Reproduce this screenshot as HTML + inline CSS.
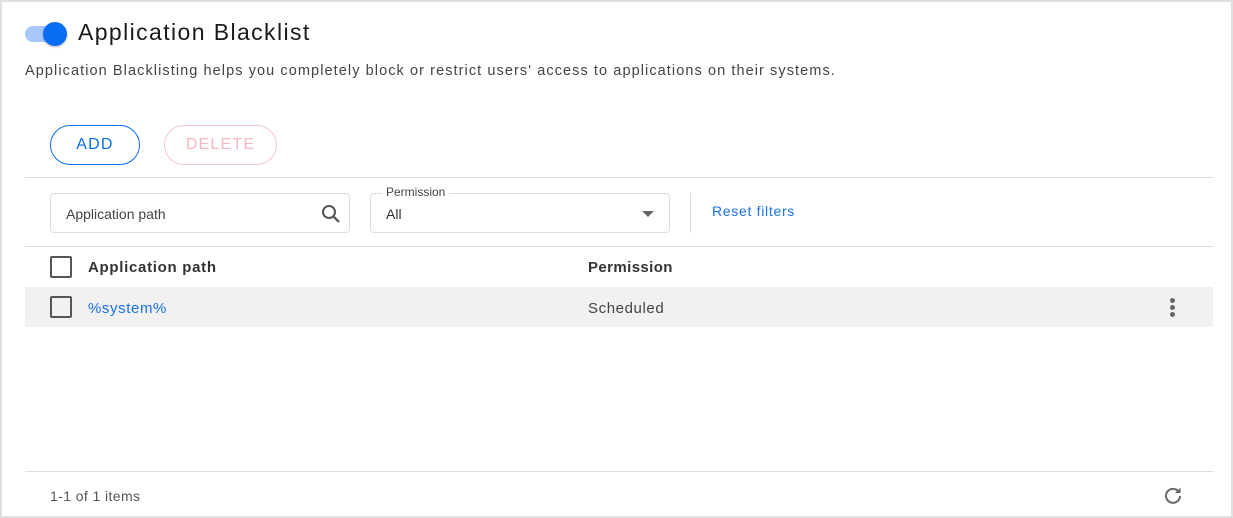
<!DOCTYPE html>
<html><head><style>
*{box-sizing:border-box;margin:0;padding:0}
body{width:1233px;height:518px;background:#e0e0e0;font-family:"Liberation Sans",sans-serif;position:relative;overflow:hidden}
.frame{position:absolute;left:2px;top:2px;width:1229px;height:514px;background:#fff}
.a{position:absolute}
</style></head><body>
<div class="frame"></div>
<div class="a" style="left:25px;top:26px;width:40px;height:16px;border-radius:8px;background:#a8c8fb"></div>
<div class="a" style="left:43px;top:22px;width:24px;height:24px;border-radius:50%;background:#0a6ef5;box-shadow:0 1px 2px rgba(0,0,0,.3)"></div>
<div class="a" style="left:78px;top:19px;font-size:23px;color:#1a1a1a;letter-spacing:1.4px">Application Blacklist</div>
<div class="a" style="left:25px;top:63px;font-size:14.5px;color:#444;letter-spacing:1.08px;white-space:nowrap">Application Blacklisting helps you completely block or restrict users' access to applications on their systems.</div>
<div class="a" style="left:50px;top:125px;width:90px;height:40px;border:1px solid #0a6ef5;border-radius:20px;color:#0a6ef5;font-size:16px;text-align:center;line-height:38px;letter-spacing:1.2px">ADD</div>
<div class="a" style="left:164px;top:125px;width:113px;height:40px;border:1px solid #f5c6cb;border-radius:20px;color:#f5b8bf;font-size:16px;text-align:center;line-height:38px;letter-spacing:1.2px">DELETE</div>
<div class="a" style="left:25px;top:177px;width:1188px;height:1px;background:#ddd"></div>
<div class="a" style="left:50px;top:193px;width:300px;height:40px;border:1px solid #ddd;border-radius:4px"></div>
<div class="a" style="left:66px;top:206px;font-size:14px;color:#444">Application path</div>
<svg class="a" style="left:320px;top:203px" width="22" height="22" viewBox="0 0 22 22"><circle cx="9" cy="9" r="6" fill="none" stroke="#555" stroke-width="2"/><path d="M13.5 13.5L19 19" stroke="#555" stroke-width="2.2"/></svg>
<div class="a" style="left:370px;top:193px;width:300px;height:40px;border:1px solid #ddd;border-radius:4px"></div>
<div class="a" style="left:382px;top:185px;padding:0 4px;background:#fff;font-size:12px;color:#444">Permission</div>
<div class="a" style="left:386px;top:206px;font-size:14px;color:#333">All</div>
<div class="a" style="left:642px;top:211px;width:0;height:0;border-left:6px solid transparent;border-right:6px solid transparent;border-top:6px solid #666"></div>
<div class="a" style="left:690px;top:193px;width:1px;height:40px;background:#ddd"></div>
<div class="a" style="left:712px;top:203px;font-size:14px;color:#1a73e8;letter-spacing:0.7px">Reset filters</div>
<div class="a" style="left:25px;top:246px;width:1188px;height:1px;background:#ddd"></div>
<div class="a" style="left:50px;top:256px;width:22px;height:22px;border:2px solid #555;border-radius:2px"></div>
<div class="a" style="left:88px;top:259px;font-size:15px;font-weight:bold;color:#333;letter-spacing:0.7px">Application path</div>
<div class="a" style="left:588px;top:259px;font-size:15px;font-weight:bold;color:#333;letter-spacing:0.4px">Permission</div>
<div class="a" style="left:25px;top:287px;width:1188px;height:40px;background:#f1f1f1"></div>
<div class="a" style="left:50px;top:296px;width:22px;height:22px;border:2px solid #555;border-radius:2px"></div>
<div class="a" style="left:88px;top:300px;font-size:15px;color:#1a73e8;letter-spacing:0.6px">%system%</div>
<div class="a" style="left:588px;top:300px;font-size:15px;color:#444;letter-spacing:0.6px">Scheduled</div>
<div class="a" style="left:1170px;top:298px;width:5px;height:5px;border-radius:50%;background:#666"></div>
<div class="a" style="left:1170px;top:305px;width:5px;height:5px;border-radius:50%;background:#666"></div>
<div class="a" style="left:1170px;top:312px;width:5px;height:5px;border-radius:50%;background:#666"></div>
<div class="a" style="left:25px;top:471px;width:1188px;height:1px;background:#ddd"></div>
<div class="a" style="left:50px;top:488px;font-size:14px;color:#555;letter-spacing:0.4px">1-1 of 1 items</div>
<svg class="a" style="left:1163px;top:485px" width="20" height="20" viewBox="0 0 20 20"><path d="M15.5 6.5A7 7 0 1 0 17 11" fill="none" stroke="#666" stroke-width="2"/><path d="M17.5 2.5V8H12z" fill="#666"/></svg>
</body></html>
